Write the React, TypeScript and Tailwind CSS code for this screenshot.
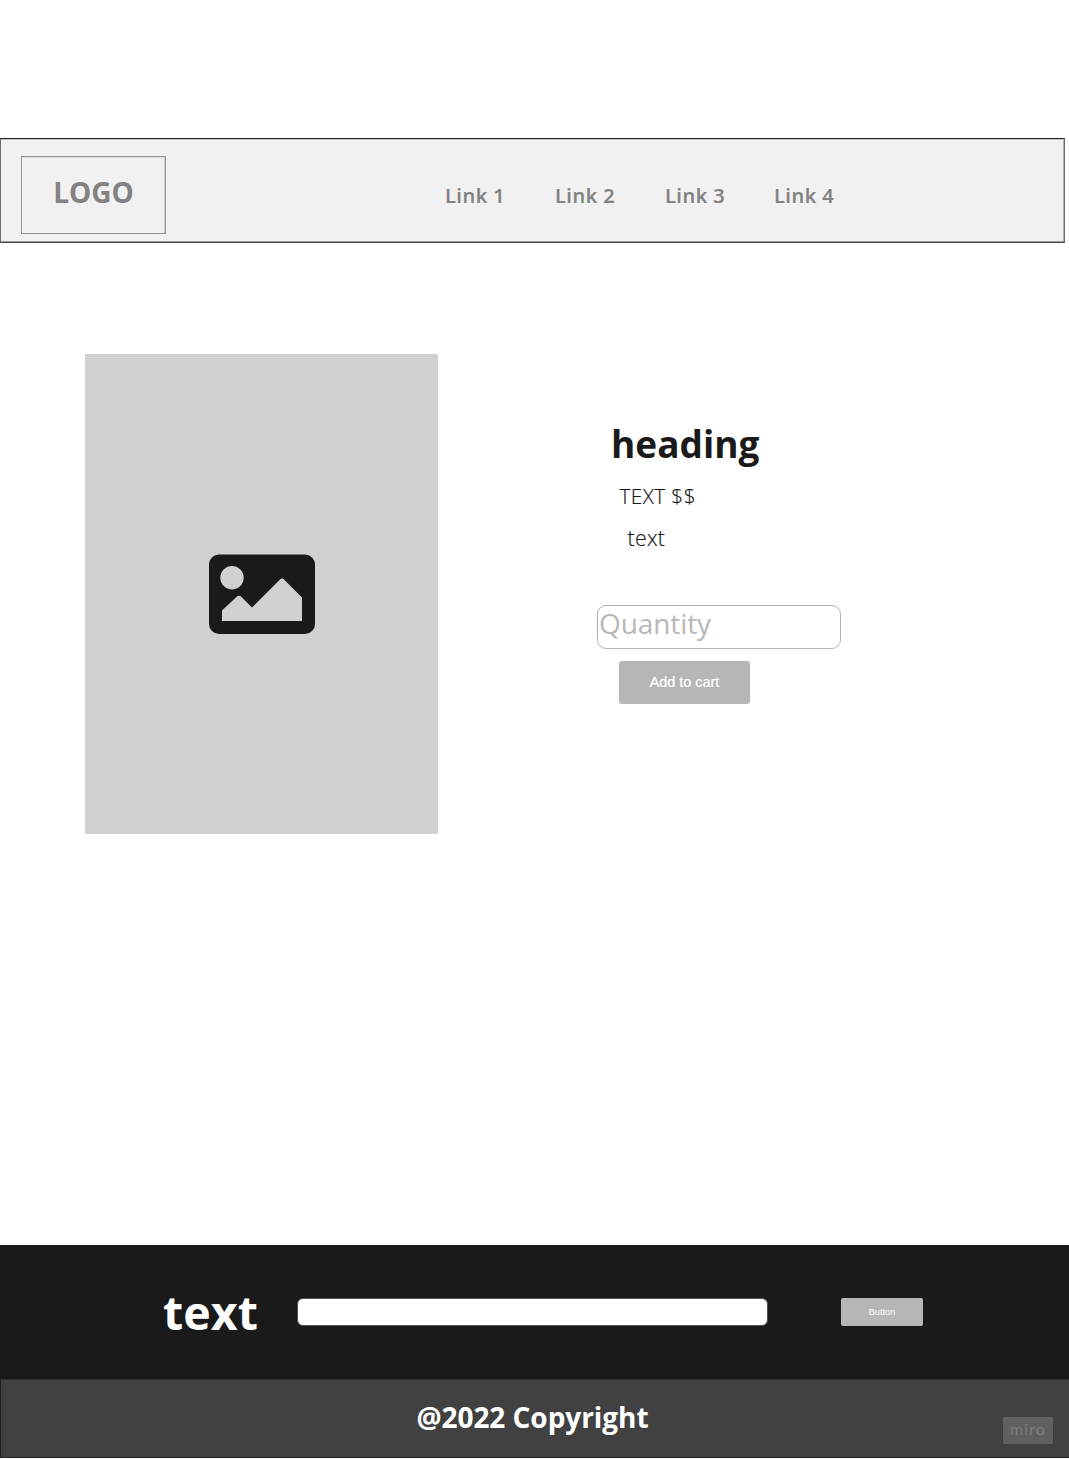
const links = [
  { label: 'Link 1', style: 'w-[110px]' },
  { label: 'Link 2', style: 'w-[110px]' },
  { label: 'Link 3', style: 'w-[109px]' },
  { label: 'Link 4', style: 'w-[110px]' },
];

function Header() {
  return (
    <header className="mt-[138px] flex h-[105px] w-[1065px] border border-t-[#1f1f23] border-b-[#484848] border-x-[#6b6b6b] bg-[#f1f1f1] text-[#828282] shadow-[inset_0_1px_0_#c4c4c4,inset_0_-1px_0_#999999,inset_-1px_0_0_#b0b0b0]">
      <div className="mt-[17px] ml-5 flex h-[78px] w-[145px] justify-center border border-[#949494] pt-[14px] shadow-[inset_0_1px_0_#dadada,inset_-1px_0_0_#cccccc]">
        <span className="text-[28px] leading-[42px] font-bold tracking-[-0.1px]">LOGO</span>
      </div>
      <nav className="mt-[42px] ml-[278px] flex h-[30px]">
        {links.map((link) => (
          <a key={link.label} className={`${link.style} pl-px text-[20px] leading-[30px] font-semibold tracking-[0.5px] whitespace-nowrap [-webkit-text-stroke:0.2px_#828282]`}>
            {link.label}
          </a>
        ))}
      </nav>
    </header>
  );
}

function PictureIcon() {
  return (
    <svg width="106" height="80" viewBox="0 0 106 80" className="block">
      <rect y="0.5" width="106" height="79.5" rx="10" fill="#1a1a1a" />
      <circle cx="23" cy="23.8" r="11.7" fill="#d1d1d1" />
      <path d="M13 67V56.5L28 42.5Q30 41 32 42.5L43 53.5L71 25.5Q73 23.5 75 25.5L93 43.5V67Z" fill="#d1d1d1" />
    </svg>
  );
}

function Product() {
  return (
    <main className="mt-[111px] ml-[85px] flex h-[480px]">
      <div className="flex h-[480px] w-[353px] items-center justify-center bg-[#d1d1d1]">
        <PictureIcon />
      </div>
      <section className="ml-[159px] flex flex-col items-start pt-[65px] text-[#1a1a1a]">
        <h1 className="ml-[14px] text-[37px] leading-[50px] font-bold">heading</h1>
        <p className="mt-[12px] ml-[22.5px] text-[20.7px] leading-[30px] font-light tracking-[0.45px] [-webkit-text-stroke:0.2px_#1a1a1a]">TEXT $$</p>
        <p className="mt-[12px] ml-[30.5px] text-[21.3px] leading-[30px] font-light tracking-[0.3px] [-webkit-text-stroke:0.2px_#1a1a1a]">text</p>
        <div className="mt-[52px] h-[44px] w-[244px] rounded-[9px] border border-[#b2b2b2] pl-px text-[28px] leading-[35px] tracking-[-0.1px] text-[#b8b8b8]">
          Quantity
        </div>
        <button className="mt-[12px] ml-[22px] h-[43px] w-[131px] rounded-[3px] bg-[#b7b6b5] font-['Liberation_Sans',sans-serif] text-[14.4px] text-white [-webkit-text-stroke:0.2px_white]">
          Add to cart
        </button>
      </section>
    </main>
  );
}

function Footer() {
  return (
    <footer className="mt-[411px] text-white">
      <div className="flex h-[134px] bg-[#1a1a1a]">
        <span className="mt-[37px] ml-[163px] w-[134px] text-[46.5px] leading-[60px] font-bold tracking-[0.1px]">text</span>
        <div className="mt-[53px] h-[28px] w-[471px] rounded-[6px] border border-[#515151] bg-white" />
        <button className="mt-[53px] ml-[73px] h-[28px] w-[82px] rounded-[2px] bg-[#b7b6b5] pt-px font-['Liberation_Sans',sans-serif] text-[9.2px]">
          Button
        </button>
      </div>
      <div className="relative flex h-[79px] justify-center border-y border-l border-t-[#303030] border-b-[#202020] border-l-[#202020] bg-[#414141]">
        <span className="mt-[16px] mr-[5px] text-[28px] leading-[42px] font-bold tracking-[-0.05px]">@2022 Copyright</span>
        <span className="absolute top-[37px] right-4 flex h-[27px] w-[50px] items-center justify-center bg-[#606060] pb-[3px] font-[Lato,sans-serif] text-[16px] tracking-[1.1px] text-[#7d7c84]">
          miro
        </span>
      </div>
    </footer>
  );
}

export default function App() {
  return (
    <div className="flow-root h-[1460px] w-[1069px] overflow-hidden bg-white font-['Open_Sans',sans-serif]">
      <Header />
      <Product />
      <Footer />
    </div>
  );
}
